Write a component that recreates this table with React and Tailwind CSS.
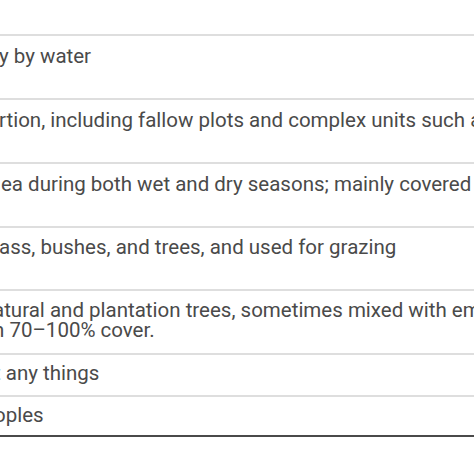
const rows = [
  { h: 'h-[64px]', pt: 'pt-[10px]', ml: '-ml-[1px]', lines: ['y by water'] },
  { h: 'h-[64px]', pt: 'pt-[10px]', ml: '-ml-[1px]', lines: ['rtion, including fallow plots and complex units such as'] },
  { h: 'h-[64px]', pt: 'pt-[10px]', ml: 'ml-[1px]', lines: ['ea during both wet and dry seasons; mainly covered by'] },
  { h: 'h-[63px]', pt: 'pt-[9px]', ml: '-ml-[1px]', lines: ['ass, bushes, and trees, and used for grazing'] },
  { h: 'h-[64px]', pt: 'pt-[9px]', ml: '-ml-[7px]', lines: ['atural and plantation trees, sometimes mixed with emergent', 'h 70–100% cover.'] },
  { h: 'h-[42px]', pt: 'pt-[8px]', ml: '-ml-[6px]', lines: ['t any things'] },
  { h: 'h-[42px]', pt: 'pt-[8px]', ml: '-ml-[6px]', lines: ['oples'] },
];

export default function App() {
  return (
    <div className="w-[474px] h-[474px] overflow-hidden bg-white font-['Roboto',sans-serif] text-[20.5px] leading-[20px] text-[#4a4a4a]">
      <div className="pt-[34px]">
        {rows.map((r, i) => (
          <div
            key={i}
            className={`${r.h} ${r.pt} border-t-2 border-[#dedede] whitespace-nowrap ${i === rows.length - 1 ? 'border-b-2 border-b-[#4a4a4a]' : ''}`}
          >
            <div className={r.ml}>
              {r.lines.map((l, j) => (
                <div key={j}>{l}</div>
              ))}
            </div>
          </div>
        ))}
      </div>
    </div>
  );
}
